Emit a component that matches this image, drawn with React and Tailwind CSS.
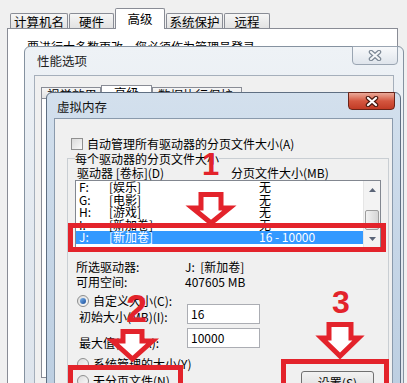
import React from 'react';

const RED = '#e3232b';

// outlined "down" arrow used for the red annotations
const DownArrow = ({ w, h, sl, sr, neck, className }) => {
  const pts = `${sl},2.5 ${sr},2.5 ${sr},${neck} ${w - 2.5},${neck} ${w / 2},${h - 3} 2.5,${neck} ${sl},${neck}`;
  return (
    <svg width={w} height={h} viewBox={`0 0 ${w} ${h}`} className={className} style={{ overflow: 'visible' }}>
      <polygon points={pts} fill="#fff" stroke={RED} strokeWidth="5" strokeLinejoin="miter" />
    </svg>
  );
};

const CloseX = ({ outline, fill }) => (
  <svg width="14" height="11" viewBox="0 0 14 11">
    <path d="M3 2 L11 9 M11 2 L3 9" stroke={outline} strokeWidth="4.5" strokeLinecap="round" />
    <path d="M3 2 L11 9 M11 2 L3 9" stroke={fill} strokeWidth="2.2" strokeLinecap="round" />
  </svg>
);

const Radio = ({ checked }) => (
  <span className="w-[12px] h-[12px] rounded-full border border-[#8e8f8f] bg-linear-to-br from-[#dcdcdc] to-[#fbfbfb] flex items-center justify-center shrink-0">
    {checked && <span className="w-[6px] h-[6px] rounded-full bg-linear-to-br from-[#7db4ee] to-[#1b4f9a]" />}
  </span>
);

const sysTabs = [
  { label: '计算机名', w: 'w-[58px]' },
  { label: '硬件', w: 'w-[45px]' },
  { label: '高级', w: 'w-[50px]', active: true },
  { label: '系统保护', w: 'w-[57px]' },
  { label: '远程', w: 'w-[46px]' },
];

const drives = [
  { d: 'F:', l: '[娱乐]', s: '无' },
  { d: 'G:', l: '[电影]', s: '无' },
  { d: 'H:', l: '[游戏]', s: '无' },
  { d: 'I:', l: '[新加卷]', s: '无' },
  { d: 'J:', l: '[新加卷]', s: '16 - 10000', sel: true },
];

export default function App() {
  return (
    <div className="relative w-[407px] h-[383px] overflow-hidden bg-[#f0f0f0] text-black text-[12px] leading-[13px] font-['Noto_Sans_CJK_SC',sans-serif]">
      {/* System properties (back) */}
      <div className="pt-[8px] pl-[7px]">
        <div className="relative z-10 flex items-end gap-[1px] h-[20px] pl-[3px]">
          {sysTabs.map((t) =>
            t.active ? (
              <div key={t.label} className={`${t.w} h-[21px] -mb-px bg-white border border-b-0 border-[#898c95] rounded-t-[2px] flex justify-center pt-[3px] text-[12.5px]`}>
                {t.label}
              </div>
            ) : (
              <div key={t.label} className={`${t.w} h-[15px] border border-b-0 border-[#898c95] rounded-t-[2px] bg-linear-to-b from-[#f6f6f6] to-[#e2e2e2] flex justify-center pt-[1px] text-[12.5px]`}>
                {t.label}
              </div>
            )
          )}
        </div>
        <div className="w-[391px] h-[360px] bg-white border border-[#898c95] pl-[19px] pt-[11px]">
          要进行大多数更改，您必须作为管理员登录。
        </div>
      </div>

      {/* 性能选项 (middle) */}
      <div className="absolute left-[24px] top-[46px] z-20 w-[380px] h-[360px] rounded-t-[6px] border border-[#8592a0] bg-linear-to-b from-[#eef2f6] via-[#e3e9f0] to-[#dde4ec]">
        <div className="relative h-[28px] pl-[12px] pt-[7px] text-[12.5px] text-[#1e1e1e]">
          性能选项
          <div className="absolute left-[327px] top-[-1px] w-[46px] h-[19px] rounded-b-[4px] border border-[#9aa5b2] bg-linear-to-b from-[#f8f9fb] to-[#dfe5ec] flex items-center justify-center">
            <CloseX outline="#7b8794" fill="#f4f6f8" />
          </div>
        </div>
        <div className="mx-[9px] h-[320px] bg-[#f0f0f0] border border-[#a5afbb] pt-[9px] pl-[6px]">
          <div className="flex items-end h-[13px] text-[12.5px]">
            <div className="w-[60px] h-[11px] border border-b-0 border-[#898c95] bg-linear-to-b from-[#f6f6f6] to-[#e2e2e2] pl-[5px]">视觉效果</div>
            <div className="w-[51px] h-[13px] border border-b-0 border-[#898c95] bg-white pl-[12px]">高级</div>
            <div className="w-[90px] h-[11px] border border-b-0 border-[#898c95] bg-linear-to-b from-[#f6f6f6] to-[#e2e2e2] pl-[5px]">数据执行保护</div>
          </div>
          <div className="h-[280px] bg-white border border-[#898c95]" />
        </div>
      </div>

      {/* 虚拟内存 (front) */}
      <div className="absolute left-[46px] top-[92px] z-30 w-[355px] h-[310px] rounded-t-[6px] border border-[#5f6f82] bg-linear-to-b from-[#d3e0ed] via-[#c6d6e7] to-[#bccee1] px-[7px]">
        <div className="relative h-[25px] pl-[3px] pt-[7px] text-[12.5px] text-[#111]">
          虚拟内存
          <div className="absolute left-[294px] top-[-1px] w-[47px] h-[18px] rounded-b-[4px] border border-[#6b2418] bg-linear-to-b from-[#e9a999] via-[#d4563f] to-[#c13b25] flex items-center justify-center">
            <CloseX outline="#4a1a10" fill="#ffffff" />
          </div>
        </div>
        <div className="h-[290px] bg-[#f0f0f0] border border-[#8a9aac] pt-[18px]">
          <div className="flex items-center gap-[4px] pl-[16px]">
            <span className="w-[12px] h-[12px] border border-[#8f8f8f] bg-linear-to-br from-[#dadada] to-[#f9f9f9]" />
            <span>自动管理所有驱动器的分页文件大小(A)</span>
          </div>

          <fieldset className="ml-[12px] mt-[2px] w-[322px] h-[260px] border border-[#c9ced3] px-[7px] pt-[1px]">
            <legend>每个驱动器的分页文件大小</legend>
            <div className="flex pl-[2px]">
              <span className="w-[154px]">驱动器 [卷标](D)</span>
              <span>分页文件大小(MB)</span>
            </div>

            <div className="mt-[1px] w-[306px] h-[68px] border border-[#828790] bg-white flex">
              <div className="flex-1 pt-0">
                {drives.map((r) => (
                  <div key={r.d} className={`flex h-[12.5px] leading-[12.5px] pl-[3px] ${r.sel ? 'bg-[#3399ff] text-white' : ''}`}>
                    <span className="w-[30px]">{r.d}</span>
                    <span className="w-[150px]">{r.l}</span>
                    <span>{r.s}</span>
                  </div>
                ))}
              </div>
              <div className="w-[17px] flex flex-col bg-[#f3f3f3] border-l border-[#e6e6e6]">
                <div className="h-[17px] flex items-center justify-center">
                  <svg width="7" height="4" viewBox="0 0 7 4"><path d="M0 4 L3.5 0 L7 4Z" fill="#5a6477" /></svg>
                </div>
                <div className="flex-1 flex flex-col justify-end px-[1px]">
                  <div className="h-[20px] rounded-[2px] border border-[#9c9c9c] bg-linear-to-r from-[#f2f2f2] to-[#d6d6d6]" />
                </div>
                <div className="h-[17px] flex items-center justify-center">
                  <svg width="7" height="4" viewBox="0 0 7 4"><path d="M0 0 L3.5 4 L7 0Z" fill="#5a6477" /></svg>
                </div>
              </div>
            </div>

            <div className="mt-[12px] pl-[1px]">
              <div className="flex h-[15px]">
                <span className="w-[109px]">所选驱动器:</span>
                <span>J:&nbsp;&nbsp;[新加卷]</span>
              </div>
              <div className="flex">
                <span className="w-[109px]">可用空间:</span>
                <span>407605 MB</span>
              </div>
            </div>

            <div className="mt-[6px] pl-[2px] flex items-center gap-[4px]">
              <Radio checked />
              <span>自定义大小(C):</span>
            </div>

            <div className="-mt-[3px] flex items-start h-[20px] pl-[4px]">
              <span className="w-[108px] mt-[6px]">初始大小(MB)(I):</span>
              <div className="w-[73px] h-[20px] border border-[#abadb3] bg-white pl-[3px] leading-[18px]">16</div>
            </div>
            <div className="mt-[4px] flex items-start h-[20px] pl-[4px]">
              <span className="w-[108px] mt-[8px]">最大值(MB)(X):</span>
              <div className="w-[73px] h-[20px] border border-[#abadb3] bg-white pl-[3px] leading-[18px]">10000</div>
            </div>

            <div className="mt-[9px] pl-[2px] flex items-center gap-[4px]">
              <Radio />
              <span>系统管理的大小(Y)</span>
            </div>
            <div className="mt-[4px] pl-[2px] flex items-start justify-between pr-[7px]">
              <div className="flex items-center gap-[4px]">
                <Radio />
                <span>无分页文件(N)</span>
              </div>
              <div className="-mt-[3px] w-[73px] h-[23px] rounded-[3px] border border-[#707070] bg-linear-to-b from-[#f2f2f2] via-[#e6e6e6] to-[#cfcfcf] flex justify-center pt-[4px]">
                设置(S)
              </div>
            </div>
          </fieldset>
        </div>
      </div>

      {/* red annotations */}
      <div className="absolute inset-0 z-40 pointer-events-none font-['Liberation_Sans',sans-serif] font-bold leading-none text-[#e3232b]">
        <span className="absolute left-[202px] top-[149px] text-[31px]">1</span>
        <DownArrow w={42} h={34} sl={11} sr={31} neck={16} className="absolute left-[190px] top-[192px]" />
        <div className="absolute left-[68px] top-[223px] w-[318px] h-[29px] border-[5px] border-[#e3232b]" />

        <span className="absolute left-[126px] top-[290px] text-[38px]">2</span>
        <DownArrow w={45} h={33} sl={13} sr={32} neck={12} className="absolute left-[110px] top-[329px]" />
        <div className="absolute left-[68px] top-[365px] w-[115px] h-[30px] border-[5px] border-[#e3232b]" />

        <span className="absolute left-[332px] top-[286px] text-[32px]">3</span>
        <DownArrow w={42} h={37} sl={10} sr={32} neck={16} className="absolute left-[319px] top-[322px]" />
        <div className="absolute left-[281px] top-[359px] w-[108px] h-[40px] border-[5px] border-[#e3232b]" />
      </div>
    </div>
  );
}
